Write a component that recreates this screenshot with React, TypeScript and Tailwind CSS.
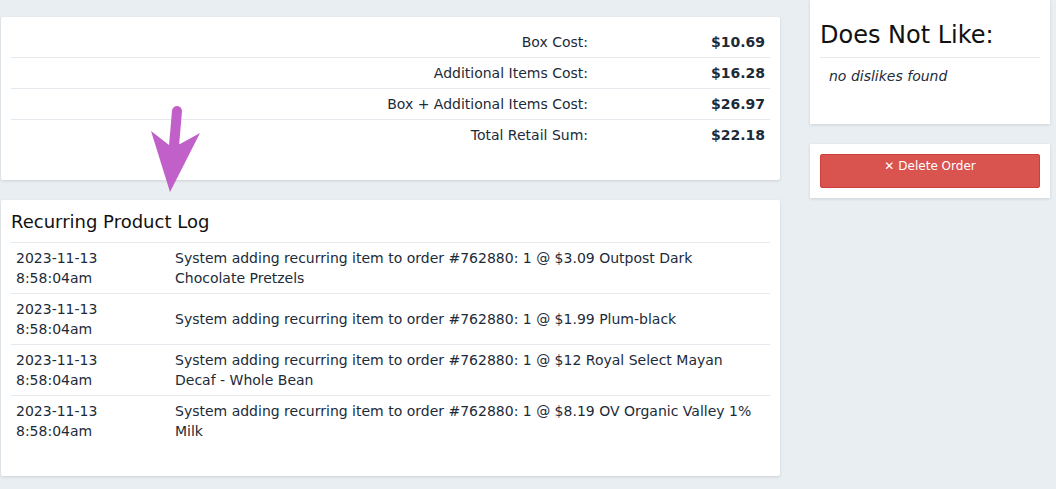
const costs = [
  { label: 'Box Cost:', value: '$10.69' },
  { label: 'Additional Items Cost:', value: '$16.28' },
  { label: 'Box + Additional Items Cost:', value: '$26.97' },
  { label: 'Total Retail Sum:', value: '$22.18' },
]

const logRows = [
  'System adding recurring item to order #762880: 1 @ $3.09 Outpost Dark Chocolate Pretzels',
  'System adding recurring item to order #762880: 1 @ $1.99 Plum-black',
  'System adding recurring item to order #762880: 1 @ $12 Royal Select Mayan Decaf - Whole Bean',
  'System adding recurring item to order #762880: 1 @ $8.19 OV Organic Valley 1% Milk',
]

function Arrow() {
  return (
    <svg className="absolute left-[140px] top-[100px]" width="70" height="100" viewBox="0 0 70 100">
      <line x1="37" y1="11" x2="34" y2="46" stroke="#c060c8" strokeWidth="10" strokeLinecap="round" />
      <polygon points="11,31 29,45 40,44 60,33 30,92" fill="#c060c8" />
    </svg>
  )
}

export default function App() {
  return (
    <div
      className="relative w-[1056px] h-[489px] overflow-hidden bg-[#e9eef2] text-[14px] text-[#1c2b39]"
      style={{ fontFamily: '"DejaVu Sans", Verdana, sans-serif' }}
    >
      <div className="flex pl-px">
        {/* left column */}
        <div className="w-[779px] pt-[17px] flex flex-col gap-[20px]">
          <div className="bg-white rounded-[2px] shadow-[0_1px_3px_rgba(0,0,0,0.12)] px-[10px] pt-[10px] pb-[30px]">
            {costs.map((c, i) => (
              <div key={c.label} className={`flex leading-[20px] ${i > 0 ? 'border-t border-[#e6eaee]' : ''}`}>
                <div className="w-[582px] text-right px-[5px] py-[5px]">{c.label}</div>
                <div className="flex-1 text-right px-[5px] py-[5px] font-bold">{c.value}</div>
              </div>
            ))}
          </div>

          <div className="bg-white rounded-[2px] shadow-[0_1px_3px_rgba(0,0,0,0.12)] px-[10px] pt-[10px] pb-[30px]">
            <h3 className="text-[18px] leading-[24px] text-[#111] mb-[8px]">Recurring Product Log</h3>
            {logRows.map((msg, i) => (
              <div key={i} className="flex leading-[20px] border-t border-[#e6eaee]">
                <div className="w-[159px] px-[5px] py-[5px]">
                  2023-11-13
                  <br />
                  8:58:04am
                </div>
                <div className="flex-1 px-[5px] py-[5px] flex items-center">{msg}</div>
              </div>
            ))}
          </div>
        </div>

        {/* right column */}
        <div className="w-[240px] ml-[30px] flex flex-col gap-[20px]">
          <div className="bg-white shadow-[0_1px_3px_rgba(0,0,0,0.12)] h-[124px] px-[10px] pt-[20px]">
            <h2 className="text-[24px] leading-[30px] text-[#111] pb-[7px] border-b border-[#e6eaee]">Does Not Like:</h2>
            <p className="italic px-[9px] pt-[8px] leading-[20px]">no dislikes found</p>
          </div>
          <div className="bg-white shadow-[0_1px_3px_rgba(0,0,0,0.12)] p-[10px]">
            <button className="w-full h-[34px] rounded-[2px] bg-[#d9534f] border border-[#cf3f3b] text-white text-[12px] leading-[16px] pt-[3px] flex justify-center items-start gap-[4px]">
              <span className="font-bold">✕</span>
              <span>Delete Order</span>
            </button>
          </div>
        </div>
      </div>
      <Arrow />
    </div>
  )
}
